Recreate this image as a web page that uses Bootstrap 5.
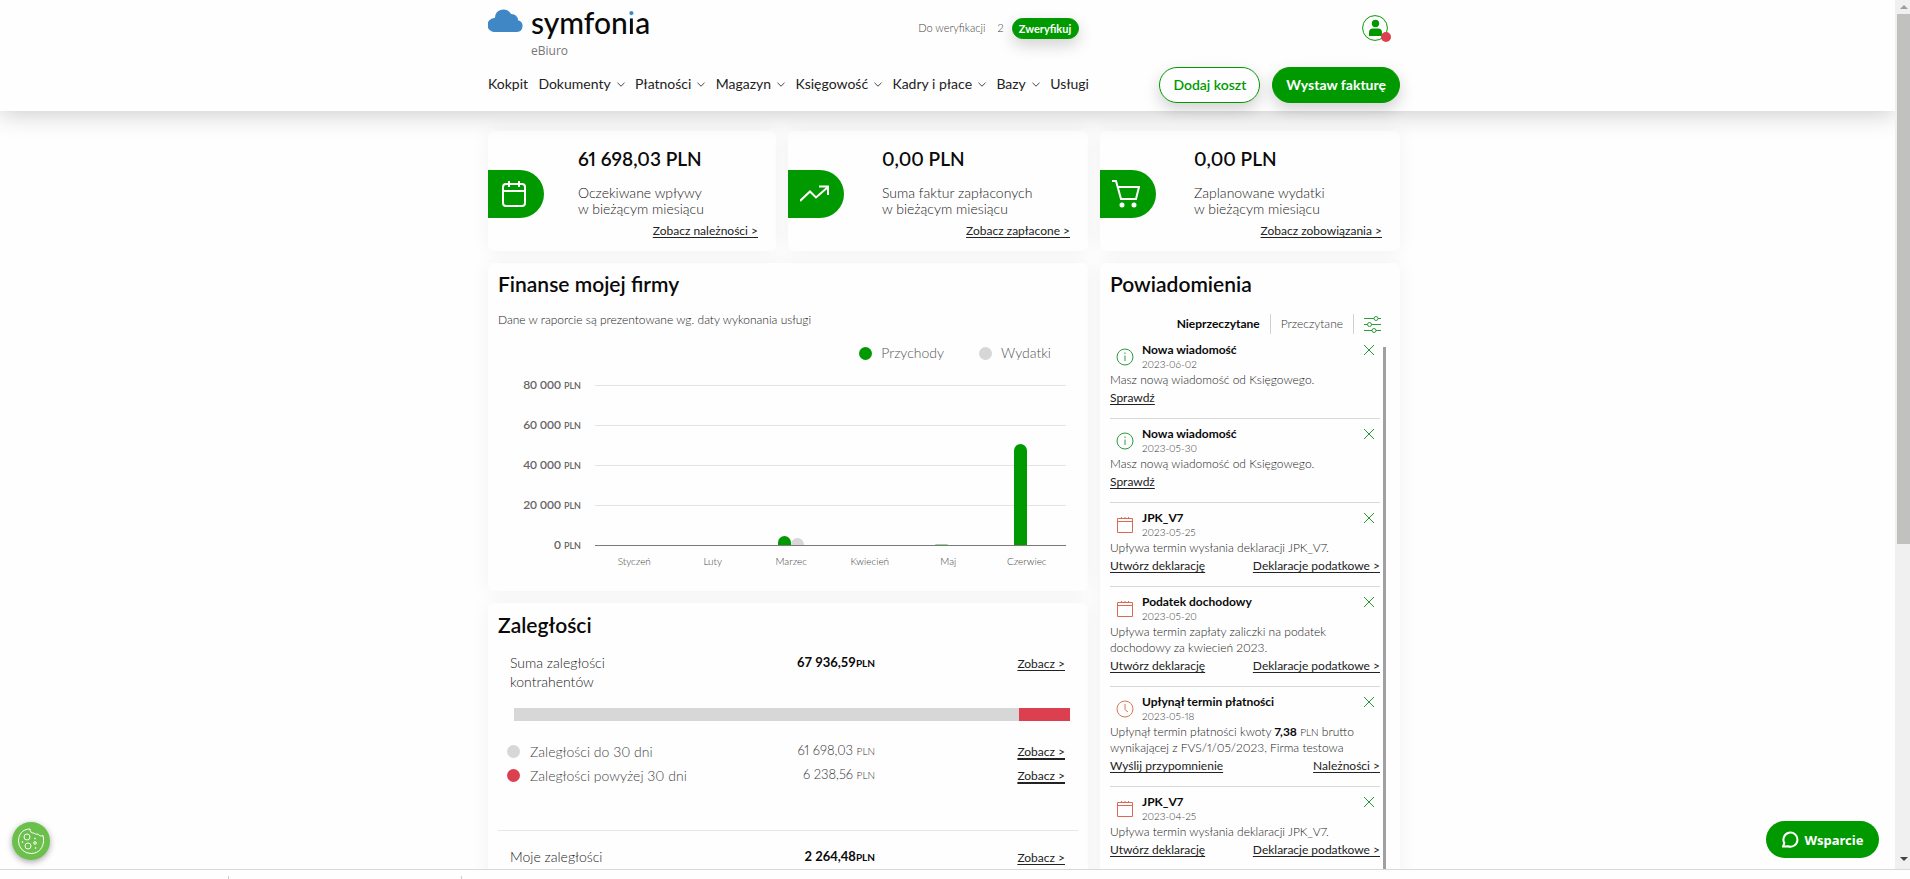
<!DOCTYPE html>
<html lang="pl">
<head>
<meta charset="utf-8">
<meta name="viewport" content="width=device-width, initial-scale=1">
<title>Symfonia eBiuro</title>
<link href="https://cdn.jsdelivr.net/npm/bootstrap@5.3.0/dist/css/bootstrap.min.css" rel="stylesheet">
<style>
:root{--green:#009a00;--red:#dc3f4f;--silver:#d7d7d7}
body{font-family:Lato,"Open Sans",sans-serif;font-size:14px;font-weight:300;font-variant-numeric:proportional-nums;line-height:16px;color:#222;background:#fefefe;height:100vh;overflow:hidden}
a{color:#222}
a:hover{color:var(--green)}
svg{display:block;flex:none}
.frame{min-height:0;border-bottom:1px solid #d8d8d8}
.page-area{min-width:0;overflow:hidden;position:relative}
.statusbar{height:9px;padding-left:228px;padding-top:6px;gap:232px}
.statusbar i{width:1px;height:3px;background:#ccc}
.scrollrail{width:15px;background:#f0f0f0;padding:5px 0 7px 2px}
.scrollrail .thumb{flex:0 0 530px;background:#c1c1bf;margin-top:4px}
.wrap{width:100%;max-width:919px;margin:0 auto;padding-right:7px}
.topbar{background:#fefefe;box-shadow:0 2px 24px rgba(0,0,0,.22);position:relative;z-index:2}
.topbar .wrap{height:111px}
.brand-row{height:62px;padding-top:8px}
.wordmark{font-size:30px;line-height:29px;color:#0a0a0a;font-weight:500}
.wordmark span{background:linear-gradient(#3f87c5 42%,#0a0a0a 42%);-webkit-background-clip:text;background-clip:text;color:transparent}
.product{font:12px/14px "Open Sans",sans-serif;color:#777;margin-top:7px}
.verify{font-size:11px;color:#444;margin-left:268px;height:32px}
.btn-pill{border-radius:24px;border:1px solid var(--green);background:var(--green);color:#fff;font-weight:700;box-shadow:0 6px 16px rgba(0,0,0,.18);padding:0;text-align:center}
.btn-pill.sm-pill{font-size:11px;width:67px;height:21px;line-height:19px}
.btn-pill.lg-pill{font-size:14px;height:36px;padding:0 13px}
.btn-pill.ghost{background:#fefefe;color:var(--green);font-weight:600}
.avatar{position:relative;border:0;background:none;padding:0;margin:7px 12px 0 0}
.avatar .dot{position:absolute;right:-3px;bottom:-1px;width:10px;height:10px;border-radius:50%;background:var(--red)}
.actions{margin-top:2px}
.mainnav{width:601px;height:44px}
.mainnav a{color:#222;text-decoration:none;font-size:14px;font-weight:400;display:flex;align-items:center;gap:6px}
.content{padding-top:20px}
.kpis{display:grid;grid-template-columns:288fr 300fr 300fr;gap:12px;margin-bottom:12px}
.cols{display:grid;grid-template-columns:600fr 300fr;gap:12px;align-items:start}
.panel{background:#fefefe;border-radius:6px;box-shadow:0 0 20px rgba(0,0,0,.05)}
.kpi{height:120px;position:relative}
.kpi .tab{width:56px;height:48px;border-radius:0 24px 24px 0;background:var(--green);margin-top:39px;padding-left:12px}
.kpi .txt{padding:17px 0 0 34px}
.kpi .txt.wide{padding-left:38px}
.amount{font-size:19px;line-height:22px;font-weight:600;color:#0a0a0a;margin-bottom:15px}
.kpi a{position:absolute;right:18px;bottom:12px}
.lnk{font-size:12px;line-height:16px;color:#222;font-weight:400;text-underline-offset:2px}
h2{font-size:21px;line-height:24px;font-weight:600;color:#0a0a0a;margin:0}
.finance{height:328px;padding:9px 10px 0}
.lead-in{font-size:12px;line-height:20px;margin-top:14px}
.legend{gap:35px;padding:15px 27px 0 0;color:#555}
.legend span{display:flex;align-items:center;gap:9px}
.bullet{width:13px;height:13px;border-radius:50%;flex:none;background:var(--silver)}
.bullet.g{background:var(--green)} .bullet.r{background:var(--red)}
.chart{padding:4px 12px 0 0;gap:14px}
.yaxis{width:83px;text-align:right;font-size:12px;color:#666;font-weight:600;font-variant-numeric:tabular-nums}
.yaxis div{height:40px;line-height:40px}
.yaxis small{font-size:9px}
.plot{height:161px;margin-top:20px;border-bottom:1px solid #7a7a7a;background:repeating-linear-gradient(#e4e4e4 0 1px,transparent 1px 40px)}
.plot div{flex:1;display:flex;align-items:flex-end;justify-content:center}
.plot i{width:13px;background:var(--green);border-radius:7px 7px 0 0}
.plot i.w{background:var(--silver)}
.plot i.faint{opacity:.4}
.months{font-size:10px;color:#444;padding-top:7px}
.months span{flex:1;text-align:center}
.debts{margin-top:12px;padding:10px 10px 24px}
.debt{display:grid;padding:0 13px 0 12px;grid-template-columns:150px 1fr 190px;line-height:19px}
.debt .val{text-align:right;color:#0a0a0a;font-weight:700;font-size:13px;font-variant-numeric:tabular-nums}
.debt small{font-size:10px}
.debt .lnk{text-align:right;line-height:19px}
.debt.part{padding-left:9px;grid-template-columns:200px 1fr 190px;line-height:23px;color:#444}
.debt.part .label-cell{gap:10px}
.debt.part .val{font-weight:300;color:#333;font-variant-numeric:proportional-nums}
.debt.part .lnk{line-height:23px}
.debt.part a{text-decoration-thickness:2px}
.split{height:13px;margin:17px 8px 18px 16px}
.split div{background:var(--silver)} .split .over{background:var(--red)}
.rule{border-top:1px solid #e6e6e6;margin:43px 0 16px}
.notes{padding:9px 14px 0 10px}
.filters{font-size:12px;margin:18px 5px 9px;height:20px}
.filters button{border:0;background:none;padding:0 10px;height:20px;line-height:20px;color:#333;font-weight:300;border-right:1px solid #d0d0d0}
.filters button.active{color:#0a0a0a;font-weight:700}
.filters .tune{border:0;padding-right:0}
.notelist{background:linear-gradient(transparent 4px,#a0a0a0 4px) right/3px 100% no-repeat;padding:4px 6px 0 0;height:600px;overflow:hidden}
.note{border-bottom:1px solid #d8d8d8;margin-bottom:12px;padding-bottom:12px;font-size:12px}
.note .hd{height:25px;padding-left:6px;gap:8px;align-items:flex-start}
.note .hd>svg{margin-top:1px}
.note h3{font-size:12px;line-height:14px;margin:-4px 0 0;font-weight:700;color:#0a0a0a}
.note time{font-size:10px;line-height:14px;display:block;color:#333}
.note button{border:0;background:none;padding:0;margin:-3px 5px 0 auto}
.note p{margin:0 0 2px}
.note p small{font-size:10px}
.note b{color:#0a0a0a;font-weight:700}
.fab{position:fixed;z-index:5;border:0}
.cookie{left:12px;bottom:19px;width:38px;height:38px;border-radius:50%;background:#6bbf4b;padding:0;box-shadow:0 2px 6px rgba(0,0,0,.35)}
.support{right:31px;bottom:21px;width:113px;height:37px;border-radius:19px;background:var(--green);color:#fff;font:700 13px "Noto Sans",sans-serif;gap:6px}
</style>
</head>
<body class="d-flex flex-column">
<svg width="0" height="0" class="position-absolute" aria-hidden="true">
 <symbol id="chev" viewBox="0 0 8 5"><path d="M.5.8 4 4.200 7.500.8" fill="none" stroke="#444"/></symbol>
 <symbol id="x" viewBox="0 0 12 12"><path d="M1 1 11 11M11 1 1 11" stroke="#1f9a2c" fill="none"/></symbol>
 <symbol id="info" viewBox="0 0 18 18"><circle cx="9" cy="9" r="8" fill="none" stroke="#2c9c3a"/><path d="M9 7.500V13M9 4.500V6" stroke="#2c9c3a"/></symbol>
 <symbol id="cal" viewBox="0 0 18 18"><path d="M1.500 2.500h15v14h-15zM1.500 5.500h15M5.500 1v2M9 1v2M12.500 1v2" fill="none" stroke="#db6a55"/></symbol>
 <symbol id="clock" viewBox="0 0 18 18"><circle cx="9" cy="9" r="8" fill="none" stroke="#d9794f"/><path d="M9 4v5.500l3 2.500" fill="none" stroke="#d9794f"/></symbol>
</svg>

<div class="frame d-flex flex-fill">
 <div class="page-area flex-fill">
  <header class="topbar">
   <div class="wrap">
    <div class="brand-row d-flex align-items-start">
     <svg width="35" height="24" viewBox="0 0 35 24"><path d="M7 24a7 7 0 0 1-1-14 7 7 0 0 1 1-.2A8.500 8.500 0 0 1 23 6a6.500 6.500 0 0 1 7 6.200A6 6 0 0 1 29 24z" fill="#3f87c5"/></svg>
     <div class="ms-2"><div class="wordmark">symfon<span>i</span>a</div><div class="product">eBiuro</div></div>
     <div class="verify d-flex align-items-center mt-1"><span>Do weryfikacji</span><span class="ms-2 ps-1">2</span><button type="button" class="btn-pill sm-pill ms-2">Zweryfikuj</button></div>
     <button type="button" class="avatar ms-auto" aria-label="Konto">
      <svg width="26" height="26" viewBox="0 0 26 26"><circle cx="13" cy="13" r="12.400" fill="#fefefe" stroke="#009a00"/><circle cx="13.500" cy="8.500" r="3.700" fill="#009a00"/><path d="M7 21v-3.500a4 4 0 0 1 4-4h5a4 4 0 0 1 4 4V21z" fill="#009a00"/></svg><span class="dot"></span>
     </button>
    </div>
    <div class="d-flex align-items-center justify-content-between">
     <nav class="mainnav d-flex align-items-center justify-content-between">
      <a href="#">Kokpit</a>
      <a href="#">Dokumenty <svg width="8" height="5"><use href="#chev"/></svg></a>
      <a href="#">Płatności <svg width="8" height="5"><use href="#chev"/></svg></a>
      <a href="#">Magazyn <svg width="8" height="5"><use href="#chev"/></svg></a>
      <a href="#">Księgowość <svg width="8" height="5"><use href="#chev"/></svg></a>
      <a href="#">Kadry i płace <svg width="8" height="5"><use href="#chev"/></svg></a>
      <a href="#">Bazy <svg width="8" height="5"><use href="#chev"/></svg></a>
      <a href="#">Usługi</a>
     </nav>
     <div class="actions d-flex gap-2"><button type="button" class="btn-pill lg-pill ghost me-1">Dodaj koszt</button><button type="button" class="btn-pill lg-pill">Wystaw fakturę</button></div>
    </div>
   </div>
  </header>

  <main class="content wrap">
   <section class="kpis">
    <div class="panel kpi d-flex">
     <div class="tab d-flex align-items-center"><svg width="28" height="28" viewBox="0 0 28 28" fill="none" stroke="#fff" stroke-width="2"><rect x="3" y="4" width="22" height="22" rx="3"/><path d="M3 11h22M9 1v6M19 1v6"/></svg></div>
     <div class="txt"><div class="amount">61 698,03 PLN</div>Oczekiwane wpływy<br>w bieżącym miesiącu</div>
     <a class="lnk" href="#">Zobacz należności &gt;</a>
    </div>
    <div class="panel kpi d-flex">
     <div class="tab d-flex align-items-center"><svg width="30" height="28" viewBox="0 0 30 28" fill="none" stroke="#fff" stroke-width="2"><path d="M0 21 10 11.500l6 6L28 7M19 6.500h9V15"/></svg></div>
     <div class="txt wide"><div class="amount">0,00 PLN</div>Suma faktur zapłaconych<br>w bieżącym miesiącu</div>
     <a class="lnk" href="#">Zobacz zapłacone &gt;</a>
    </div>
    <div class="panel kpi d-flex">
     <div class="tab d-flex align-items-center"><svg width="28" height="28" viewBox="0 0 28 28" fill="none" stroke="#fff" stroke-width="2"><path d="M-1 1h5l5 18h15l3-12H6"/><circle cx="10" cy="25" r="1.500" fill="#fff"/><circle cx="22" cy="25" r="1.500" fill="#fff"/></svg></div>
     <div class="txt wide"><div class="amount">0,00 PLN</div>Zaplanowane wydatki<br>w bieżącym miesiącu</div>
     <a class="lnk" href="#">Zobacz zobowiązania &gt;</a>
    </div>
   </section>

   <div class="cols">
    <div>
     <section class="panel finance">
      <h2>Finanse mojej firmy</h2>
      <div class="lead-in">Dane w raporcie są prezentowane wg. daty wykonania usługi</div>
      <div class="legend d-flex justify-content-end"><span><i class="bullet g"></i>Przychody</span><span><i class="bullet"></i>Wydatki</span></div>
      <div class="chart d-flex">
       <div class="yaxis"><div>80 000 <small>PLN</small></div><div>60 000 <small>PLN</small></div><div>40 000 <small>PLN</small></div><div>20 000 <small>PLN</small></div><div>0 <small>PLN</small></div></div>
       <div class="flex-fill">
        <div class="plot d-flex">
         <div></div><div></div>
         <div><i style="height:9px"></i><i class="w" style="height:7px"></i></div>
         <div></div>
         <div><i class="faint" style="height:1px"></i><i class="w" style="height:0"></i></div>
         <div><i style="height:101px"></i><i class="w" style="height:0"></i></div>
        </div>
        <div class="months d-flex"><span>Styczeń</span><span>Luty</span><span>Marzec</span><span>Kwiecień</span><span>Maj</span><span>Czerwiec</span></div>
       </div>
      </div>
     </section>

     <section class="panel debts">
      <h2 class="mb-3">Zaległości</h2>
      <div class="debt"><span>Suma zaległości kontrahentów</span><span class="val">67 936,59<small>PLN</small></span><span class="text-end"><a class="lnk" href="#">Zobacz &gt;</a></span></div>
      <div class="split d-flex"><div style="width:90.800%"></div><div class="over" style="width:9.200%"></div></div>
      <div class="debt part"><span class="label-cell d-flex align-items-center"><i class="bullet"></i>Zaległości do 30 dni</span><span class="val">61 698,03 <small>PLN</small></span><span class="text-end"><a class="lnk" href="#">Zobacz &gt;</a></span></div>
      <div class="debt part"><span class="label-cell d-flex align-items-center"><i class="bullet r"></i>Zaległości powyżej 30 dni</span><span class="val">6 238,56 <small>PLN</small></span><span class="text-end"><a class="lnk" href="#">Zobacz &gt;</a></span></div>
      <div class="rule"></div>
      <div class="debt"><span>Moje zaległości</span><span class="val">2 264,48<small>PLN</small></span><span class="text-end"><a class="lnk" href="#">Zobacz &gt;</a></span></div>
     </section>
    </div>

    <section class="panel notes">
     <h2>Powiadomienia</h2>
     <div class="filters d-flex justify-content-end">
      <button type="button" class="active">Nieprzeczytane</button><button type="button">Przeczytane</button>
      <button type="button" class="tune" aria-label="Filtry"><svg width="17" height="18" viewBox="0 0 17 18" fill="#fefefe" stroke="#2c9c3a"><path d="M0 3.500h17M0 9.500h17M0 15.500h17"/><circle cx="12" cy="3.500" r="2"/><circle cx="5.500" cy="9.500" r="2"/><circle cx="10" cy="15.500" r="2"/></svg></button>
     </div>
     <div class="notelist">
      <article class="note"><div class="hd d-flex"><svg width="18" height="18"><use href="#info"/></svg><div><h3>Nowa wiadomość</h3><time>2023-06-02</time></div><button type="button" aria-label="Zamknij"><svg width="12" height="12"><use href="#x"/></svg></button></div>
       <p>Masz nową wiadomość od Księgowego.</p><div class="d-flex justify-content-between"><a class="lnk" href="#">Sprawdź</a></div></article>
      <article class="note"><div class="hd d-flex"><svg width="18" height="18"><use href="#info"/></svg><div><h3>Nowa wiadomość</h3><time>2023-05-30</time></div><button type="button" aria-label="Zamknij"><svg width="12" height="12"><use href="#x"/></svg></button></div>
       <p>Masz nową wiadomość od Księgowego.</p><div class="d-flex justify-content-between"><a class="lnk" href="#">Sprawdź</a></div></article>
      <article class="note"><div class="hd d-flex"><svg width="18" height="18"><use href="#cal"/></svg><div><h3>JPK_V7</h3><time>2023-05-25</time></div><button type="button" aria-label="Zamknij"><svg width="12" height="12"><use href="#x"/></svg></button></div>
       <p>Upływa termin wysłania deklaracji JPK_V7.</p><div class="d-flex justify-content-between"><a class="lnk" href="#">Utwórz deklarację</a><a class="lnk" href="#">Deklaracje podatkowe &gt;</a></div></article>
      <article class="note"><div class="hd d-flex"><svg width="18" height="18"><use href="#cal"/></svg><div><h3>Podatek dochodowy</h3><time>2023-05-20</time></div><button type="button" aria-label="Zamknij"><svg width="12" height="12"><use href="#x"/></svg></button></div>
       <p>Upływa termin zapłaty zaliczki na podatek<br>dochodowy za kwiecień 2023.</p><div class="d-flex justify-content-between"><a class="lnk" href="#">Utwórz deklarację</a><a class="lnk" href="#">Deklaracje podatkowe &gt;</a></div></article>
      <article class="note"><div class="hd d-flex"><svg width="18" height="18"><use href="#clock"/></svg><div><h3>Upłynął termin płatności</h3><time>2023-05-18</time></div><button type="button" aria-label="Zamknij"><svg width="12" height="12"><use href="#x"/></svg></button></div>
       <p>Upłynął termin płatności kwoty <b>7,38</b> <small>PLN</small> brutto<br>wynikającej z FVS/1/05/2023, Firma testowa</p><div class="d-flex justify-content-between"><a class="lnk" href="#">Wyślij przypomnienie</a><a class="lnk" href="#">Należności &gt;</a></div></article>
      <article class="note"><div class="hd d-flex"><svg width="18" height="18"><use href="#cal"/></svg><div><h3>JPK_V7</h3><time>2023-04-25</time></div><button type="button" aria-label="Zamknij"><svg width="12" height="12"><use href="#x"/></svg></button></div>
       <p>Upływa termin wysłania deklaracji JPK_V7.</p><div class="d-flex justify-content-between"><a class="lnk" href="#">Utwórz deklarację</a><a class="lnk" href="#">Deklaracje podatkowe &gt;</a></div></article>
     </div>
    </section>
   </div>
  </main>
 </div>
 <div class="scrollrail d-flex flex-column" aria-hidden="true">
  <svg class="mx-auto" width="8" height="5" viewBox="0 0 8 5"><path d="M0 4 4 0l4 4z" fill="#9a9ea3"/></svg>
  <div class="thumb"></div>
  <svg class="mx-auto mt-auto" width="8" height="5" viewBox="0 0 8 5"><path d="M0 0h8L4 4z" fill="#444"/></svg>
 </div>
</div>
<div class="statusbar d-flex" aria-hidden="true"><i></i><i></i></div>

<button type="button" class="fab cookie d-flex align-items-center justify-content-center" aria-label="Pliki cookie"><svg width="28" height="28" viewBox="0 0 28 28" fill="none" stroke="#fff"><path d="M13 2C5 2 1.500 8 1.500 14A12.500 12.500 0 0 0 14 26.500c8 0 12.500-6 12.500-13 0-2 0-3-.5-5-2 1-4 .5-5-1.500-2 .5-3 0-4-1-2.500.5-4-1.500-4-4z"/><circle cx="10" cy="10" r="3"/><circle cx="11" cy="19" r="3"/><circle cx="18" cy="16" r="1.300"/><circle cx="18" cy="11.500" r=".5"/><circle cx="18.500" cy="21" r=".5"/><circle cx="5.500" cy="15" r=".5"/></svg></button>
<button type="button" class="fab support d-flex align-items-center justify-content-center"><svg width="17" height="17" viewBox="0 0 17 17" fill="none" stroke="#fff" stroke-width="2"><path d="M1 15.500l1.300-3.500A7 7 0 1 1 6 15.200z"/></svg>Wsparcie</button>
<script src="https://cdn.jsdelivr.net/npm/bootstrap@5.3.0/dist/js/bootstrap.bundle.min.js"></script>
</body>
</html>
